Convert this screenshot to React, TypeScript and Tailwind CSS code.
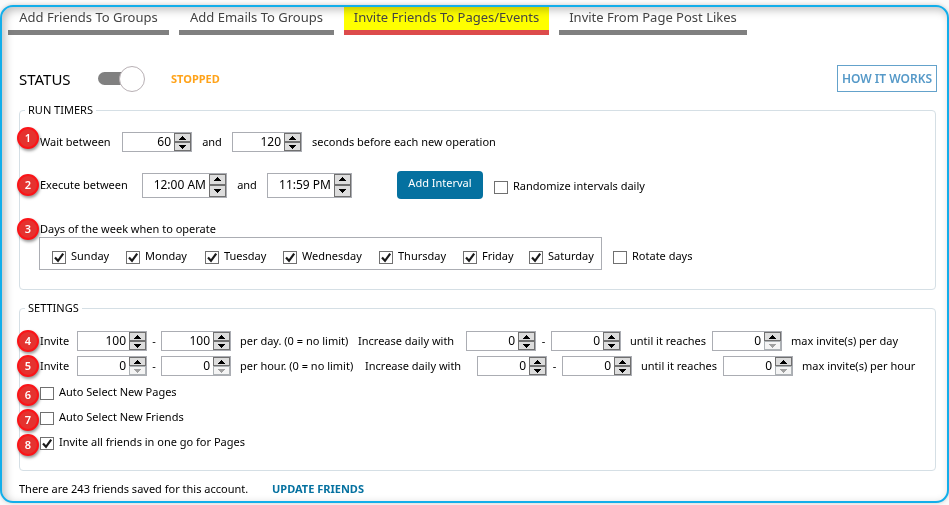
import React, { useState } from "react";
import clsx from "clsx";

const tabs = [
  "Add Friends To Groups",
  "Add Emails To Groups",
  "Invite Friends To Pages/Events",
  "Invite From Page Post Likes",
];
const tabWidths = ["w-[161px]", "w-[155px]", "w-[205px]", "w-[188px]"];

const days = [
  { name: "Sunday", width: "w-[74px]" },
  { name: "Monday", width: "w-[79px]" },
  { name: "Tuesday", width: "w-[78px]" },
  { name: "Wednesday", width: "w-[96px]" },
  { name: "Thursday", width: "w-[84px]" },
  { name: "Friday", width: "w-[66px]" },
  { name: "Saturday", width: "w-[72px]" },
];

function Badge({ n, className }: { n: number; className?: string }) {
  return (
    <span
      className={clsx(
        "absolute top-1/2 -left-[23px] flex size-[22px] -translate-y-1/2 items-center justify-center rounded-full border-2 border-[#fb1418] bg-[#e5322f] text-[11px] font-semibold text-white shadow-[1px_2px_3px_rgba(0,0,0,0.4)]",
        className,
      )}
    >
      {n}
    </span>
  );
}

function Arrow({ down }: { down?: boolean }) {
  return (
    <svg viewBox="0 0 7 4" className="h-1 w-[7px]" fill="currentColor" shapeRendering="crispEdges" aria-hidden="true">
      <path d={down ? "M0 0H7V1H6V2H5V3H4V4H3V3H2V2H1V1H0Z" : "M0 4H7V3H6V2H5V1H4V0H3V1H2V2H1V3H0Z"} />
    </svg>
  );
}

function Spinner({ value, label, tall, atMin }: { value: string; label: string; tall?: boolean; atMin?: boolean }) {
  const button = "flex min-h-0 flex-1 items-center justify-center border";
  return (
    <span className={clsx("flex shrink-0 border border-[#abadb3] bg-white", tall ? "h-[25px] w-[85px]" : "h-5 w-[70px]")}>
      <input
        type="text"
        aria-label={label}
        defaultValue={value}
        className="w-0 min-w-0 flex-1 bg-transparent pr-[3px] text-right text-[12px] outline-none"
      />
      <span className="flex w-[17px] flex-col">
        <button type="button" aria-label={label + " up"} className={clsx(button, "border-[#707070] bg-[#dddddd] text-black")}>
          <Arrow />
        </button>
        <button
          type="button"
          disabled={atMin}
          aria-label={label + " down"}
          className={clsx(button, atMin ? "border-[#adb2b5] bg-[#f4f4f4] text-[#a0a0a0]" : "border-[#707070] bg-[#dddddd] text-black")}
        >
          <Arrow down />
        </button>
      </span>
    </span>
  );
}

function Check({ label, checked, className }: { label: string; checked?: boolean; className?: string }) {
  const [on, setOn] = useState(!!checked);
  return (
    <label className={clsx("flex h-[18px] shrink-0 whitespace-nowrap", className)}>
      <span className="relative mt-[3px] mr-[5px] h-[14px] w-[14px] shrink-0">
        <input
          type="checkbox"
          checked={on}
          onChange={() => setOn(!on)}
          className="block h-[13px] w-[14px] appearance-none border border-[#707070] bg-white"
        />
        {on && (
          <svg viewBox="0 0 14 14" className="pointer-events-none absolute inset-0 size-[14px]" fill="none" stroke="#1a1a1a" strokeWidth="2.2" aria-hidden="true">
            <path d="M3 6.5L6 9.8L11.2 2.7" />
          </svg>
        )}
      </span>
      <span className="leading-4">{label}</span>
    </label>
  );
}

function Text({ children, className }: { children: React.ReactNode; className?: string }) {
  return <span className={clsx("shrink-0 whitespace-nowrap", className)}>{children}</span>;
}

function LimitRow({ n, unit, value }: { n: number; unit: "day" | "hour"; value: string }) {
  const hour = unit === "hour";
  return (
    <div className="relative flex h-5 items-center">
      <Badge n={n} />
      <Text className="w-[37px]">Invite</Text>
      <Spinner value={value} label={"Invites per " + unit + " from"} atMin={hour} />
      <Text className="w-[14px] text-center">-</Text>
      <Spinner value={value} label={"Invites per " + unit + " to"} atMin={hour} />
      <Text className={clsx("pl-[9px]", hour ? "w-[134px]" : "w-[127px]")}>per {unit}. (0 = no limit)</Text>
      <Text className={hour ? "w-[112px]" : "w-[108px]"}>Increase daily with</Text>
      <Spinner value="0" label={"Increase per " + unit + " from"} />
      <Text className="w-[15px] text-center">-</Text>
      <Spinner value="0" label={"Increase per " + unit + " to"} />
      <Text className="w-[91px] pl-[9px]">until it reaches</Text>
      <Spinner value="0" label={"Maximum invites per " + unit} atMin />
      <Text className="pl-[9px]">max invite(s) per {unit}</Text>
    </div>
  );
}

export default function App() {
  const [running, setRunning] = useState(false);
  return (
    <div className="bg-[#fafafa] pt-[5px] pb-[3px] font-['Noto_Sans','Open_Sans',sans-serif] text-[11px] leading-4 text-black">
      <main className="flex flex-col rounded-[13px] border-2 border-[#12aeea] bg-white pr-[10px] pb-1 pl-[17px] shadow-[inset_3px_3px_8px_rgba(0,0,0,0.25),0_0_4px_rgba(0,0,0,0.2)]">
        <nav className="-ml-[11px] flex gap-[10px]">
          {tabs.map((tab, i) => (
            <button
              key={tab}
              type="button"
              className={clsx(
                "h-7 shrink-0 border-b-[5px] pb-[3px] text-[13px] leading-5 whitespace-nowrap text-[#444444] mix-blend-multiply",
                tabWidths[i],
                i === 2 ? "border-[#dd4b4b] bg-[#ffff00]" : "border-[#808080]",
              )}
            >
              {tab}
            </button>
          ))}
        </nav>

        <header className="mt-[30px] flex h-[27px] items-center">
          <Text className="w-[79px] text-[15px]">STATUS</Text>
          <button
            type="button"
            role="switch"
            aria-checked={running}
            aria-label="Status"
            onClick={() => setRunning(!running)}
            className="flex h-[26px] w-[47px] items-center"
          >
            <span className="h-[13px] w-[26px] rounded-l-full bg-[#808080]" />
            <span className="-ml-[5px] size-[26px] rounded-full border border-[#b8b0b4] bg-white" />
          </button>
          <Text className="pl-[26px] font-bold text-[#ffa31a]">STOPPED</Text>
          <button type="button" className="ml-auto h-[27px] w-[100px] border border-[#64a2cb] text-[12px] font-semibold whitespace-nowrap text-[#5599c8]">
            HOW IT WORKS
          </button>
        </header>

        <fieldset className="mt-[10px] mr-px rounded-[4px] border border-[#d5dfe5] pb-[19px] pl-5">
          <legend className="-ml-[15px] px-[3px]">RUN TIMERS</legend>
          <div className="relative mt-[14px] flex h-5 items-center">
            <Badge n={1} className="-mt-1" />
            <Text className="w-[82px]">Wait between</Text>
            <Spinner value="60" label="Minimum wait" />
            <Text className="w-10 text-center">and</Text>
            <Spinner value="120" label="Maximum wait" />
            <Text className="pl-[10px]">seconds before each new operation</Text>
          </div>
          <div className="relative mt-[19px] flex h-7 items-center">
            <Badge n={2} />
            <Text className="w-[102px]">Execute between</Text>
            <Spinner tall value="12:00 AM" label="Start time" />
            <Text className="w-10 text-center">and</Text>
            <Spinner tall value="11:59 PM" label="End time" />
            <button type="button" className="ml-[45px] h-7 w-[86px] shrink-0 rounded-[4px] bg-[#0571a0] pb-[5px] whitespace-nowrap text-white">
              Add Interval
            </button>
            <Check label="Randomize intervals daily" className="mt-[3px] ml-[11px]" />
          </div>
          <div className="relative mt-[22px] flex h-4 items-center">
            <Badge n={3} />
            <Text>Days of the week when to operate</Text>
          </div>
          <div className="-ml-px flex">
            <div className="flex h-[33px] shrink-0 border border-[#abadb3] pt-[10px] pl-3">
              {days.map((day) => (
                <Check key={day.name} label={day.name} checked className={day.width} />
              ))}
            </div>
            <Check label="Rotate days" className="mt-[11px] ml-[11px]" />
          </div>
        </fieldset>

        <fieldset className="mt-[10px] mr-px rounded-[4px] border border-[#d5dfe5] pb-[18px] pl-5">
          <legend className="-ml-[15px] px-[3px]">SETTINGS</legend>
          <div className="mt-[15px] flex flex-col gap-[5px]">
            <LimitRow n={4} unit="day" value="100" />
            <LimitRow n={5} unit="hour" value="0" />
          </div>
          <div className="mt-2 flex flex-col gap-[7px]">
            {["Auto Select New Pages", "Auto Select New Friends", "Invite all friends in one go for Pages"].map((label, i) => (
              <div key={label} className="relative">
                <Badge n={6 + i} className="mt-0.5" />
                <Check label={label} checked={i === 2} />
              </div>
            ))}
          </div>
        </fieldset>

        <footer className="mt-[10px] flex h-4 items-center">
          <Text className="w-[253px]">There are 243 friends saved for this account.</Text>
          <a href="#update" className="font-bold whitespace-nowrap text-[#0571a0]">
            UPDATE FRIENDS
          </a>
        </footer>
      </main>
    </div>
  );
}
